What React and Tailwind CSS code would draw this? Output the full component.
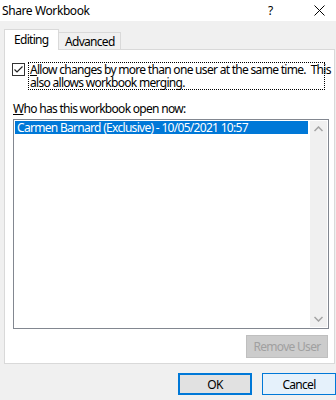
import React from "react";

function Chevron({ up }) {
  return (
    <svg width="9" height="6" viewBox="0 0 9 6" className="block">
      <path
        d={up ? "M0.5 5 L4.5 1 L8.5 5" : "M0.5 1 L4.5 5 L8.5 1"}
        fill="none"
        stroke="#a3a3a3"
        strokeWidth="1.5"
      />
    </svg>
  );
}

export default function App() {
  return (
    <div className="w-[336px] h-[400px] bg-[#f0f0f0] flex flex-col font-['Noto_Sans',sans-serif] text-[12px] tracking-[-0.7px] text-black leading-[13px] overflow-hidden">
      {/* Title bar */}
      <div className="h-[21px] bg-white flex items-center justify-between pl-[2px]">
        <span className="text-[12px] leading-[16px] tracking-[-0.4px]">Share Workbook</span>
        <div className="flex items-center">
          <span className="text-[12px] w-[10px] mr-[36px]">?</span>
          <svg width="11" height="11" viewBox="0 0 11 11" className="mr-[11px]">
            <path d="M0.5 0.5 L10.5 10.5 M10.5 0.5 L0.5 10.5" stroke="#000" strokeWidth="1" fill="none" />
          </svg>
        </div>
      </div>

      {/* Tabs */}
      <div className="flex items-end pl-[4px] mt-[8px] h-[20px]">
        <div className="relative z-10 -mb-px h-[21px] w-[55px] bg-white border border-b-0 border-[#d9d9d9] flex items-center pl-[9px] pb-[1px]">
          Editing
        </div>
        <div className="h-[17px] w-[62px] bg-[#f0f0f0] border border-l-0 border-b-0 border-[#d9d9d9] flex items-center pl-[6px]">
          Advanced
        </div>
      </div>

      {/* Panel */}
      <div className="ml-[4px] w-[331px] h-[315px] bg-white border border-[#d9d9d9] flex flex-col">
        <div className="flex items-start mt-[12px] pl-[7px]">
          <div className="mt-[1px] w-[13px] h-[13px] border border-[#333333] bg-white flex items-center justify-center shrink-0">
            <svg width="11" height="11" viewBox="0 0 11 11">
              <path d="M1.5 5.5 L4 8 L9.5 2.5" fill="none" stroke="#222" strokeWidth="1.2" />
            </svg>
          </div>
          <div className="ml-[3px] w-[297px] h-[28px] border border-dotted border-black pl-[1px] pt-[0px] flex flex-col">
            <div className="whitespace-nowrap leading-[13px]">
              <span className="underline">A</span>llow changes by more than one user at the same time.{"\u00a0 "}This
            </div>
            <div className="whitespace-nowrap leading-[13px]">also allows workbook merging.</div>
          </div>
        </div>

        <div className="mt-[12px] pl-[8px] leading-[14px]">
          <span className="underline">W</span>ho has this workbook open now:
        </div>

        <div className="mt-[3px] ml-[8px] w-[316px] h-[210px] border border-[#828790] bg-white flex p-[1px]">
          <div className="flex-1">
            <div className="h-[13px] bg-[#0078d7] text-white pl-[2px] leading-[13px]">
              Carmen Barnard (Exclusive) - 10/05/2021 10:57
            </div>
          </div>
          <div className="w-[17px] ml-[2px] bg-[#f0f0f0] flex flex-col items-center justify-between py-[5px]">
            <Chevron up />
            <Chevron />
          </div>
        </div>

        <div className="flex justify-end mt-[6px] pr-[6px]">
          <div className="w-[82px] h-[23px] bg-[#cccccc] border border-[#bfbfbf] flex items-center justify-center text-[#a0a0a0]">
            Remove User
          </div>
        </div>
      </div>

      {/* Footer */}
      <div className="flex justify-end mt-[9px] gap-[10px]">
        <div className="w-[74px] h-[22px] bg-[#e1e1e1] border-2 border-[#0078d7] flex items-center justify-center">
          OK
        </div>
        <div className="w-[74px] h-[22px] bg-[#e5f1fb] border border-[#0078d7] flex items-center justify-center">
          Cancel
        </div>
      </div>
    </div>
  );
}
